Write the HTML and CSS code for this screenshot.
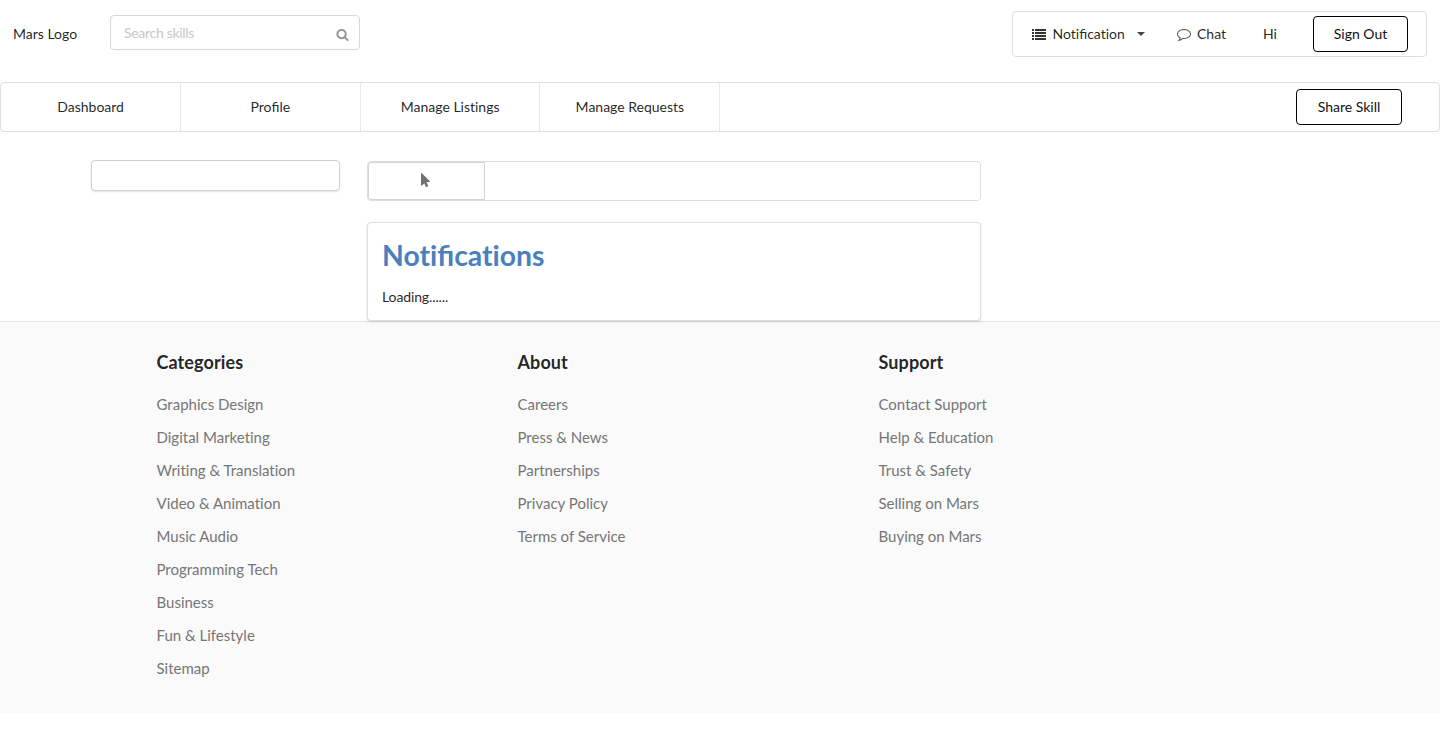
FILE: index.html
```html
<!DOCTYPE html>
<html lang="en">
<head>
<meta charset="utf-8">
<title>Mars - Notifications</title>
<link rel="stylesheet" href="styles.css">
</head>
<body>
<header class="topbar">
  <span class="logo">Mars Logo</span>
  <label class="search">
    <input class="search-input" type="text" placeholder="Search skills">
    <svg class="search-icon" viewBox="0 0 1792 1792"><path d="M1216 832q0-185-131.500-316.500t-316.500-131.500-316.500 131.500-131.500 316.500 131.500 316.500 316.500 131.500 316.500-131.500 131.500-316.500zm512 832q0 52-38 90t-90 38q-54 0-90-38l-343-342q-179 124-399 124-143 0-273.500-55.500t-225-150-150-225-55.500-273.500 55.500-273.500 150-225 225-150 273.500-55.500 273.500 55.500 225 150 150 225 55.500 273.500q0 220-124 399l343 343q37 37 37 90z"/></svg>
  </label>
  <div class="account">
    <a class="notification"><svg class="list-icon" viewBox="0 0 14 11"><path d="M0 0h2v2H0zM3 0h11v2H3zM0 3h2v2H0zM3 3h11v2H3zM0 6h2v2H0zM3 6h11v2H3zM0 9h2v2H0zM3 9h11v2H3z"/></svg><span>Noti<span class="lig">fi</span>cation</span><svg class="caret" viewBox="0 0 8 4"><path d="M0 0h8L4 4z"/></svg></a>
    <a class="chat"><svg class="chat-icon" viewBox="0 0 1792 1792"><path d="M896 384q-204 0-381.500 69.500t-282 187.500-104.500 255q0 112 71.500 213.500t201.500 175.500l87 50-27 96q-24 91-70 172 152-63 275-171l43-38 57 6q69 8 130 8 204 0 381.500-69.500t282-187.500 104.500-255-104.500-255-282-187.500-381.500-69.500zm896 512q0 174-120 321.500t-326 233-450 85.500q-70 0-145-8-198 175-460 242-49 14-114 22h-5q-15 0-27-10.500t-16-27.500v-1q-3-4-.5-12t2-10 4.500-9.500l6-9 7-8.500 8-9q7-8 31-34.500t34.500-38 31-39.500 32.500-51 27-59 26-76q-157-89-247.500-220t-90.500-281q0-174 120-321.500t326-233 450-85.500 450 85.500 326 233 120 321.500z"/></svg><span>Chat</span></a>
    <span class="greeting">Hi</span>
    <button class="btn sign-out">Sign Out</button>
  </div>
</header>
<nav class="nav">
  <a class="nav-item">Dashboard</a>
  <a class="nav-item">Pro<span class="lig">fi</span>le</a>
  <a class="nav-item">Manage Listings</a>
  <a class="nav-item">Manage Requests</a>
  <button class="btn share">Share Skill</button>
</nav>
<main class="content">
  <aside class="side-card"></aside>
  <section class="main-column">
    <div class="toolbar">
      <div class="tool"><svg class="pointer-icon" viewBox="0 0 1152 1792"><path d="M1133 1043q31 30 14 69-17 40-59 40h-382l201 476q10 25 0 49t-34 35l-177 75q-25 10-49 0t-35-34l-191-452-312 312q-19 19-45 19-12 0-24-5-40-17-40-59v-1504q0-42 40-59 12-5 24-5 27 0 45 19z"/></svg></div>
    </div>
    <div class="panel">
      <h1 class="title">Noti<span class="lig">fi</span>cations</h1>
      <p class="loading">Loading......</p>
    </div>
  </section>
</main>
<footer class="footer">
  <div class="col">
    <h2 class="col-title">Categories</h2>
    <a class="link">Graphics Design</a>
    <a class="link">Digital Marketing</a>
    <a class="link">Writing &amp; Translation</a>
    <a class="link">Video &amp; Animation</a>
    <a class="link">Music Audio</a>
    <a class="link">Programming Tech</a>
    <a class="link">Business</a>
    <a class="link">Fun &amp; Lifestyle</a>
    <a class="link">Sitemap</a>
  </div>
  <div class="col">
    <h2 class="col-title">About</h2>
    <a class="link">Careers</a>
    <a class="link">Press &amp; News</a>
    <a class="link">Partnerships</a>
    <a class="link">Privacy Policy</a>
    <a class="link">Terms of Service</a>
  </div>
  <div class="col">
    <h2 class="col-title">Support</h2>
    <a class="link">Contact Support</a>
    <a class="link">Help &amp; Education</a>
    <a class="link">Trust &amp; Safety</a>
    <a class="link">Selling on Mars</a>
    <a class="link">Buying on Mars</a>
  </div>
</footer>
</body>
</html>
```
FILE: styles.css
```css
* { box-sizing: border-box; }
body {
  margin: 0;
  background: #fff;
  color: rgba(0, 0, 0, .87);
  font: 14px/20px Lato, "Open Sans", sans-serif;
  font-variant-ligatures: no-common-ligatures;
}
.lig { font-variant-ligatures: common-ligatures; }
svg { display: block; flex: none; fill: currentColor; }

.topbar {
  display: flex;
  align-items: flex-start;
  height: 82px;
  padding: 11px 13px 0;
}
.logo { width: 97px; padding-top: 13px; }
.search {
  display: flex;
  align-items: center;
  width: 250px;
  height: 35px;
  margin-top: 4px;
  padding: 0 10px 0 13px;
  border: 1px solid #d8d8d9;
  border-radius: 4px;
}
.search-input {
  flex: 1;
  min-width: 0;
  padding: 0;
  border: 0;
  outline: 0;
  background: none;
  font: inherit;
  letter-spacing: -.3px;
}
.search-input::placeholder { color: #c7c7c7; }
.search-icon { width: 13px; height: 13px; margin-top: 4px; color: #939393; }
.account {
  display: flex;
  align-items: center;
  width: 415px;
  height: 46px;
  margin-left: auto;
  padding-left: 19px;
  border: 1px solid #dededf;
  border-radius: 4px;
}
.notification { display: flex; align-items: center; width: 145px; }
.list-icon { width: 14px; height: 11px; margin-right: 6.5px; color: #333; }
.caret { width: 8px; height: 4px; margin-left: auto; margin-right: 32px; color: #444; }
.chat { display: flex; align-items: center; width: 86px; }
.chat-icon { width: 14px; height: 14px; margin-right: 6px; color: #555; }
.greeting { width: 50px; }
.btn {
  height: 36px;
  padding: 0;
  border: 1px solid #000;
  border-radius: 4px;
  background: #fff;
  color: #111;
  font: inherit;
}
.sign-out { width: 95px; }

.nav {
  display: flex;
  align-items: center;
  height: 50px;
  padding-right: 37px;
  border: 1px solid #dededf;
  border-radius: 4px;
}
.nav-item {
  width: 179.75px;
  padding-left: .5px;
  border-right: 1px solid #e8e8e9;
  line-height: 48px;
  text-align: center;
}
.share { width: 106px; margin-left: auto; }

.content {
  display: flex;
  align-items: flex-start;
  gap: 27px;
  height: 189px;
  padding: 28px 0 0 91px;
}
.side-card {
  width: 249px;
  height: 31px;
  border: 1px solid #d0d0d1;
  border-radius: 4px;
  box-shadow: 0 1px 2px rgba(34, 36, 38, .12);
}
.main-column { width: 614px; padding-top: 1px; }
.toolbar {
  display: flex;
  height: 40px;
  margin-bottom: 21px;
  border: 1px solid #dededf;
  border-radius: 4px;
}
.tool {
  display: flex;
  align-items: center;
  justify-content: center;
  width: 117px;
  border: 1px solid #d4d4d5;
  border-radius: 3px 0 0 3px;
}
.pointer-icon { width: 9px; height: 14px; margin-right: 2px; margin-bottom: 2px; color: #707070; }
.panel {
  position: relative;
  height: 99px;
  padding: 14px;
  border: 1px solid #dededf;
  border-radius: 4px;
  background: #fff;
  box-shadow: 0 1px 2px rgba(34, 36, 38, .15);
}
.title { margin: 0 0 14px; color: #4a80bd; font-size: 28.35px; line-height: 36px; }
.loading { margin: 0; letter-spacing: -.12px; }

.footer {
  display: flex;
  height: 392px;
  padding: 29px 0 0 156.5px;
  border-top: 1px solid #e2e2e3;
  background: #fafafa;
}
.col { display: flex; flex-direction: column; width: 361px; }
.col-title { margin: 0 0 14px; font-size: 18px; line-height: 23px; letter-spacing: .1px; }
.link { color: #767676; font-size: 15px; line-height: 33px; }
```
